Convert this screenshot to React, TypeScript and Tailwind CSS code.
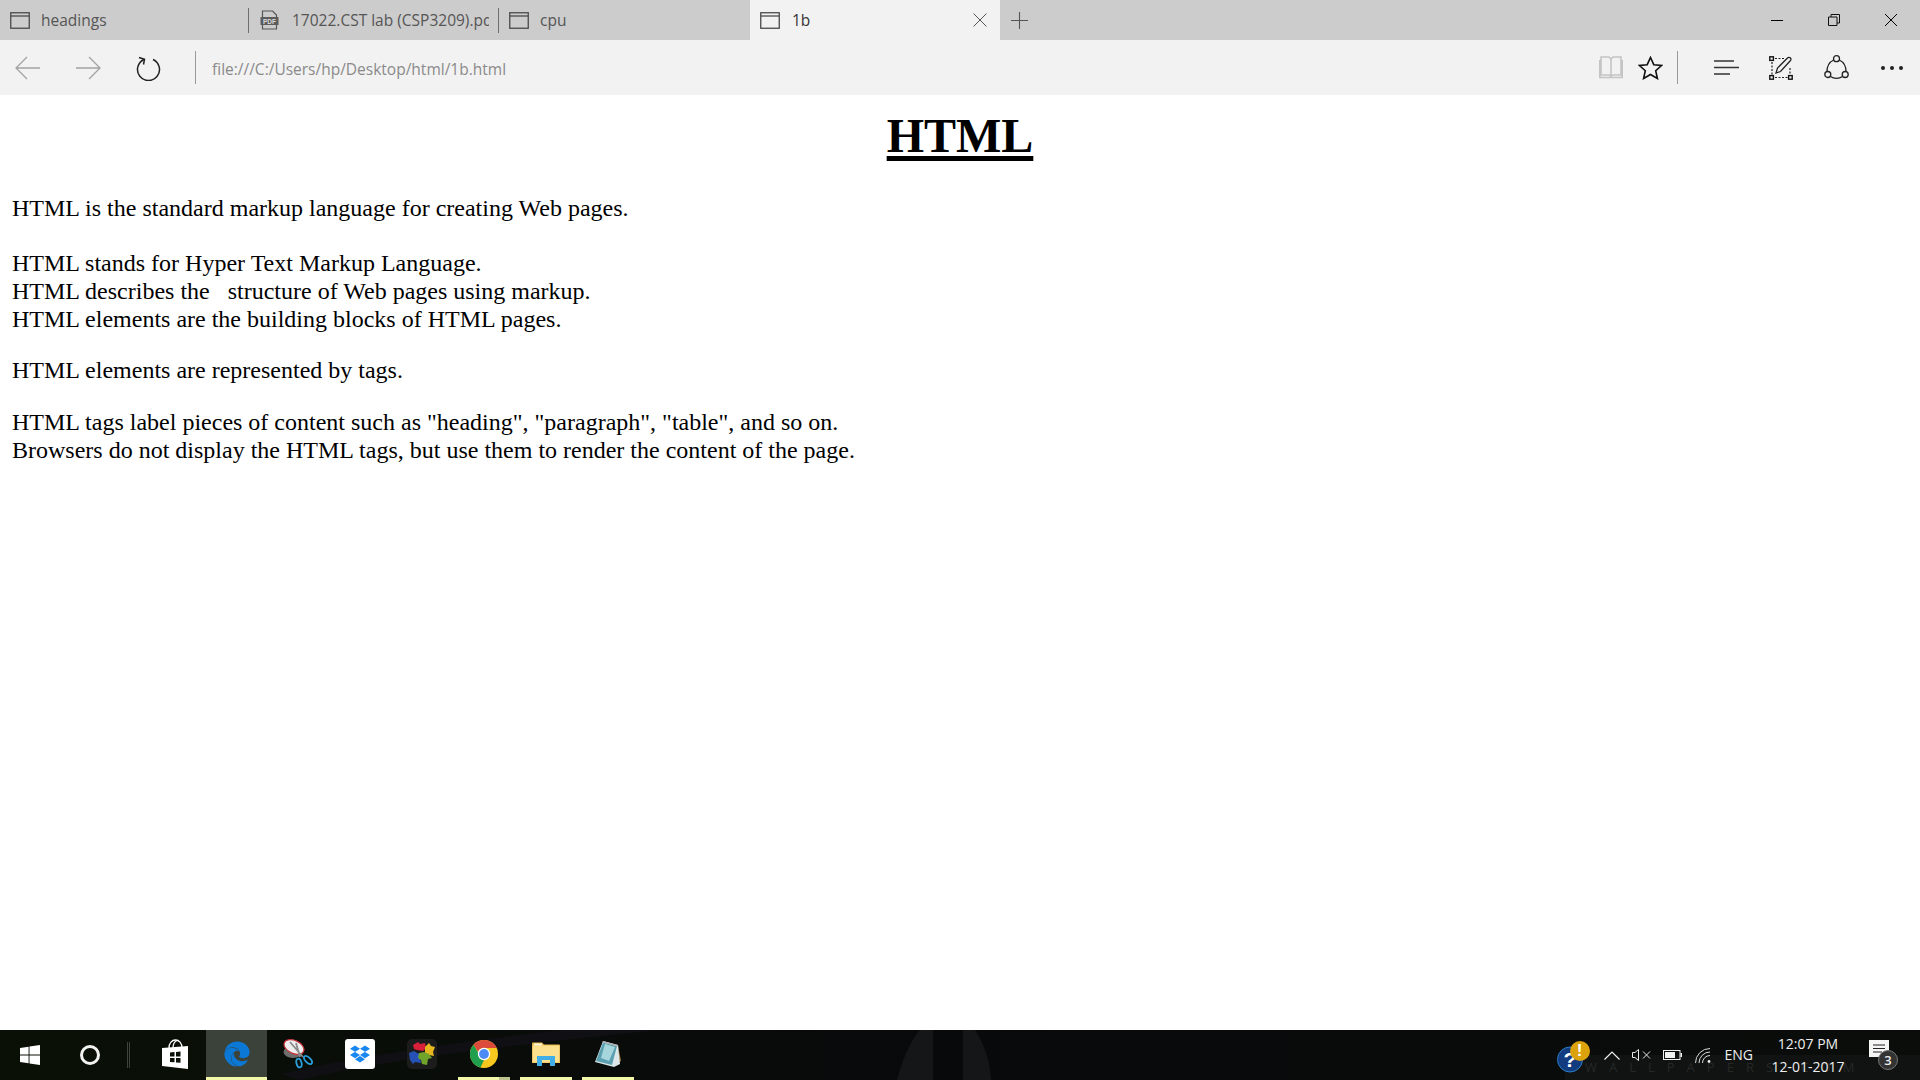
import type { ReactNode } from "react";
import { FaEdge, FaDropbox } from "react-icons/fa";

function TabIcon() {
  return (
    <svg width="20" height="17" viewBox="0 0 20 17" fill="none" className="shrink-0">
      <rect x="0.75" y="0.75" width="18.5" height="15.5" stroke="#4a4a4a" strokeWidth="1.3" />
      <line x1="1" y1="4" x2="19" y2="4" stroke="#4a4a4a" strokeWidth="1.3" />
    </svg>
  );
}

function PdfIcon() {
  return (
    <svg width="19" height="20" viewBox="0 0 19 20" fill="none" className="shrink-0">
      <path d="M2.5 7V1h10l4 4v2M2.5 15v4h14v-4" stroke="#555" strokeWidth="1.2" />
      <rect x="0.5" y="7" width="18" height="8" fill="#5c5c5c" />
      <text x="9.5" y="13.5" textAnchor="middle" fontSize="6.5" fontWeight="700" fill="#ddd" fontFamily="Liberation Sans, sans-serif">PDF</text>
    </svg>
  );
}

function Tab({ title, pdf, width }: { title: string; pdf?: boolean; width: string }) {
  return (
    <div className={`flex h-full items-center overflow-hidden ${width}`}>
      <div className={pdf ? "ml-[11px]" : "ml-[10px]"}>{pdf ? <PdfIcon /> : <TabIcon />}</div>
      <span className={`mt-[2px] whitespace-nowrap text-[15.5px] text-[#555] ${pdf ? "ml-[13px]" : "ml-[11px]"}`}>{title}</span>
    </div>
  );
}

function Sep() {
  return <div className="h-[25px] w-px shrink-0 bg-[#6e6e6e]" />;
}

function TabStrip() {
  return (
    <div className="flex h-10 items-center bg-[#cccccc]">
      <Tab title="headings" width="w-[248px]" />
      <Sep />
      <Tab title="17022.CST lab (CSP3209).pdf" pdf width="w-[240px]" />
      <div className="w-[9px]" />
      <Sep />
      <Tab title="cpu" width="w-[251px]" />
      <div className="flex h-full w-[250px] items-center bg-[#f2f2f2]">
        <div className="ml-[10px]"><TabIcon /></div>
        <span className="ml-3 mt-[2px] text-[15.5px] text-[#333]">1b</span>
        <svg width="14" height="14" viewBox="0 0 14 14" className="ml-auto mr-[13px]" stroke="#555" strokeWidth="1">
          <path d="M0.5 0.5l13 13M13.5 0.5l-13 13" />
        </svg>
      </div>
      <svg width="17" height="17" viewBox="0 0 17 17" className="ml-[11px]" stroke="#555" strokeWidth="1.1">
        <path d="M8.5 0v17M0 8.5h17" />
      </svg>
      <div className="ml-auto flex items-center pr-[23px]">
        <svg width="12" height="12" viewBox="0 0 12 12" stroke="#000" strokeWidth="1"><path d="M0 6.5h12" /></svg>
        <svg width="12" height="12" viewBox="0 0 12 12" fill="none" stroke="#111" strokeWidth="1" className="ml-[45px]">
          <path d="M0.5 3h8.5v8.5h-8.5zM3 3V0.5h8.5v8.5H9" />
        </svg>
        <svg width="12" height="12" viewBox="0 0 12 12" stroke="#000" strokeWidth="1" className="ml-[45px]">
          <path d="M0 0l12 12M12 0L0 12" />
        </svg>
      </div>
    </div>
  );
}

function Toolbar() {
  return (
    <div className="flex h-[55px] items-center bg-[#f2f2f2]">
      <svg width="25" height="24" viewBox="0 0 25 24" fill="none" stroke="#a3a3a3" strokeWidth="1.3" className="ml-[15px]">
        <path d="M25 12H1M12 1L1 12l11 11" />
      </svg>
      <svg width="25" height="24" viewBox="0 0 25 24" fill="none" stroke="#a3a3a3" strokeWidth="1.3" className="ml-[36px]">
        <path d="M0 12h24M13 1l11 11-11 11" />
      </svg>
      <svg width="25" height="26" viewBox="0 0 25 26" fill="none" stroke="#222" strokeWidth="1.5" className="ml-[35px]">
        <path d="M8 4.5a11 11 0 1 0 9 0" />
        <path d="M3 2.5l5.5 1.8L7.500 9.500" />
      </svg>
      <div className="ml-[34px] h-[33px] w-px bg-[#999]" />
      <span className="ml-4 mt-1 text-[15.5px] text-[#8a8a8a]">file:///C:/Users/hp/Desktop/html/1b.html</span>
      <div className="ml-auto flex items-center pr-[17px]">
        <svg width="24" height="23" viewBox="0 0 24 23" fill="none" stroke="#c4c4c4" strokeWidth="1.6">
          <path d="M2 1h8l2 2 2-2h8v18h-8l-2 1-2-1H2zM12 3v17M0.8 4v17.5h22.4V4" />
        </svg>
        <svg width="25" height="24" viewBox="0 0 25 24" fill="none" stroke="#111" strokeWidth="1.6" className="ml-[15px]">
          <path d="M12.5 1.5l3.3 7.2 7.7.8-5.8 5.2 1.7 7.8-6.9-4-6.9 4 1.7-7.8L1.5 9.5l7.7-.8z" />
        </svg>
        <div className="ml-[14px] h-[33px] w-px bg-[#999]" />
        <svg width="25" height="15" viewBox="0 0 25 15" stroke="#333" strokeWidth="1.5" className="ml-[36px]">
          <path d="M0 1h20M0 7.5h25M0 14h16" />
        </svg>
        <svg width="24" height="24" viewBox="0 0 24 24" fill="none" className="ml-[30px]">
          <path d="M3 6v13M21 12v7M6 21.5h13M6 2.500h10" stroke="#222" strokeWidth="1.2" strokeDasharray="2 1.5" />
          <rect x="0.8" y="0.8" width="3.6" height="3.6" stroke="#111" strokeWidth="1.4" />
          <rect x="0.8" y="19.6" width="3.6" height="3.6" stroke="#111" strokeWidth="1.4" />
          <rect x="19.6" y="19.6" width="3.6" height="3.6" stroke="#111" strokeWidth="1.4" />
          <path d="M7 17l1.500-5L18.500 2a1.800 1.800 0 0 1 3 2.500L11.500 15.500z" stroke="#222" strokeWidth="1.3" />
        </svg>
        <svg width="25" height="25" viewBox="0 0 25 25" fill="none" stroke="#222" strokeWidth="1.3" className="ml-[31px]">
          <circle cx="12.5" cy="3.7" r="3" />
          <circle cx="3.8" cy="19.5" r="3" />
          <circle cx="21.2" cy="19.5" r="3" />
          <path d="M9.700 5C5.500 7 3 11 3 16.500M15.300 5c4.200 2 6.700 6 6.700 11.500M6.500 21.500c3.500 2.500 8.500 2.500 12 0" />
        </svg>
        <div className="ml-[32px] flex w-[22px] justify-between">
          <span className="size-1 rounded-full bg-[#222]" />
          <span className="size-1 rounded-full bg-[#222]" />
          <span className="size-1 rounded-full bg-[#222]" />
        </div>
      </div>
    </div>
  );
}

function PageBody() {
  return (
    <main className="flex-1 bg-white px-3 font-['Liberation_Serif','Times_New_Roman',serif] text-[24px] leading-[27.6px] text-black">
      <h1 className="pt-[13px] text-center text-[48px] font-bold leading-[55px] underline decoration-[5px] underline-offset-[4px] [text-decoration-skip-ink:none]">
        HTML
      </h1>
      <p className="mt-[32px]">HTML is the standard markup language for creating Web pages.</p>
      <p className="mt-[27px]">
        HTML stands for Hyper Text Markup Language.
        <br />
        <span className="mt-[1px] inline-block">HTML describes the&nbsp;&nbsp; structure of Web pages using markup.</span>
        <br />
        HTML elements are the building blocks of HTML pages.
      </p>
      <p className="mt-[24px]">HTML elements are represented by tags.</p>
      <p className="mt-[24px]">
        HTML tags label pieces of content such as "heading", "paragraph", "table", and so on.
        <br />
        Browsers do not display the HTML tags, but use them to render the content of the page.
      </p>
    </main>
  );
}

function WinLogo() {
  return (
    <svg width="20" height="20" viewBox="0 0 20 20" fill="#fff">
      <path d="M0 3l8.600-1.200v7.700H0zM9.500 1.600L20 0v9.500H9.500zM0 10.500h8.600v7.700L0 17zM9.500 10.500H20V20L9.500 18.400z" />
    </svg>
  );
}

function StoreIcon() {
  return (
    <svg width="26" height="30" viewBox="0 0 26 30" fill="none">
      <path d="M7 9c0-5 3-8 6.500-8S20 4 20 9M11 9c0-4 1.500-6.500 4-7.500" stroke="#fff" strokeWidth="1.3" />
      <path d="M0 9l26-2v23L0 27z" fill="#fff" />
      <path d="M8 13.500l4.500-.4v4.400H8zM14 13l4.500-.4v4.900H14zM8 19h4.500v4.300L8 23zM14 19h4.500v4.800l-4.500-.4z" fill="#0a0f08" />
    </svg>
  );
}

function SnipIcon() {
  return (
    <svg width="30" height="30" viewBox="0 0 30 30" fill="none">
      <ellipse cx="10" cy="13" rx="9.500" ry="6" fill="#6e6e6e" />
      <ellipse cx="11" cy="8" rx="10.500" ry="6.500" transform="rotate(25 11 8)" fill="#eeeeee" stroke="#c8333a" strokeWidth="1.200" />
      <path d="M7 3l13 15M13 4l4 14" stroke="#8a8a8a" strokeWidth="1.800" />
      <ellipse cx="16" cy="24" rx="2.500" ry="4.500" transform="rotate(-15 16 24)" stroke="#2a9fdc" strokeWidth="1.800" />
      <ellipse cx="25" cy="21" rx="2.500" ry="5" transform="rotate(-45 25 21)" stroke="#2a9fdc" strokeWidth="1.800" />
    </svg>
  );
}

function PuzzleIcon() {
  return (
    <svg width="30" height="30" viewBox="0 0 30 30">
      <rect width="30" height="30" rx="5" fill="#1c1c1c" />
      <path d="M6 6l5-3 2 2 5-1 1 5-3 3-6-1-3-1z" fill="#d8203a" />
      <path d="M18 8l4-4 2 3 4 1-2 5 1 4-5-1-4-2z" fill="#e6b71e" />
      <path d="M2 14l5-2 3 2 4 1-1 5 1 4-6-1-2 2-3-4z" fill="#2652b8" />
      <path d="M12 14l5-1 5 2 3 4-4 1-1 6-5-1-1-4-3-2z" fill="#6fa32a" />
    </svg>
  );
}

function ChromeIcon() {
  return (
    <svg width="28" height="28" viewBox="0 0 28 28">
      <circle cx="14" cy="14" r="14" fill="#f9c81e" />
      <path d="M14 0a14 14 0 0 1 12.600 8H14a6 6 0 0 0-5.700 4L3.500 4.700A14 14 0 0 1 14 0z" fill="#dc4a3c" />
      <path d="M3.500 4.700l5 8.300a6 6 0 0 0 5.500 7l-3.500 7.600A14 14 0 0 1 3.500 4.700z" fill="#1f9e4d" />
      <circle cx="14" cy="14" r="6.200" fill="#fff" />
      <circle cx="14" cy="14" r="4.900" fill="#4c8bf5" />
    </svg>
  );
}

function FolderIcon() {
  return (
    <svg width="28" height="24" viewBox="0 0 28 24">
      <path d="M0 1.500A1 1 0 0 1 1 .5h9l2 2h15a1 1 0 0 1 1 1V21H0z" fill="#e8b94c" />
      <rect x="0.700" y="3.500" width="26.600" height="17" fill="#fce08e" />
      <rect x="2" y="1.500" width="8" height="2" fill="#fff7d6" />
      <path d="M5 24V14h18v10h-5v-6h-8v6z" fill="#42aee8" />
    </svg>
  );
}

function NotepadIcon() {
  return (
    <svg width="28" height="28" viewBox="0 0 28 28">
      <path d="M24 5l3 16-2 1z" fill="#a07a3c" />
      <path d="M9 1l15 4 2 19-6 3L1 22z" fill="#dbe7ea" />
      <path d="M9 2.500l14 3.500-5 19L2 21z" fill="#5aa0b0" />
      <path d="M11 4l10 3-6 14-8-3z" fill="#a6d5dc" />
      <path d="M9 1l15 4-.5 1.500L8.500 2.500z" fill="#b0b0b0" />
    </svg>
  );
}

function AppSlot({ children, width, active, running, stacked }: { children: ReactNode; width: string; active?: boolean; running?: boolean; stacked?: boolean }) {
  return (
    <div className={`relative flex h-full shrink-0 items-center justify-center ${width} ${active ? "bg-[#3b4239]" : ""}`}>
      <div className="-mt-[2px] flex">{children}</div>
      {active && <div className="absolute inset-x-0 bottom-0 h-[3px] bg-[#f3f7a8]" />}
      {running && (
        <div className="absolute inset-x-[5px] bottom-0 flex h-[3px] justify-end bg-[#f3f7a8]">
          {stacked && <div className="w-[11px] bg-[#bfc48f]" />}
        </div>
      )}
    </div>
  );
}

function Tray() {
  return (
    <div className="relative ml-auto flex h-full items-center">
      <div className="relative -mt-[1px] h-[36px] w-[34px]">
        <svg width="26" height="28" viewBox="0 0 26 28" className="absolute bottom-0 left-0">
          <circle cx="13" cy="14.500" r="12.500" fill="#123b80" stroke="#2a7fc8" strokeWidth="1" />
          <text x="13" y="22" textAnchor="middle" fontSize="21" fontWeight="700" fill="#fff" fontFamily="Liberation Sans, sans-serif">?</text>
        </svg>
        <div className="absolute left-[13px] top-[4px] flex size-[20px] items-center justify-center rounded-full bg-[#dca20c] font-['Liberation_Sans',sans-serif] text-[17px] font-bold leading-none text-white">!</div>
      </div>
      <svg width="16" height="9" viewBox="0 0 16 9" fill="none" stroke="#f0f0f0" strokeWidth="1.200" className="ml-[13px]">
        <path d="M0.500 8.500L8 1l7.500 7.500" />
      </svg>
      <svg width="19" height="12" viewBox="0 0 19 12" fill="none" stroke="#e8e8e8" strokeWidth="1" className="ml-3">
        <path d="M0.500 3.500h2.500L6.500 0.500v11L3 8.500H0.500zM11 2.500l7 7M18 2.500l-7 7" />
      </svg>
      <svg width="19" height="10" viewBox="0 0 19 10" className="ml-3">
        <rect x="0.500" y="0.500" width="16.500" height="9" fill="none" stroke="#f0f0f0" />
        <rect x="2" y="2" width="10" height="6" fill="#f0f0f0" />
        <rect x="17.500" y="3" width="1.500" height="4" fill="#f0f0f0" />
      </svg>
      <svg width="16" height="15" viewBox="0 0 16 15" fill="none" stroke="#d8d8d8" strokeWidth="1" className="ml-[13px]">
        <path d="M0.500 15A14.500 14.500 0 0 1 15 0.500M4 15A11 11 0 0 1 15 4M7.500 15A7.500 7.500 0 0 1 15 7.500" />
        <circle cx="14" cy="13.500" r="1.400" fill="#f0f0f0" stroke="none" />
      </svg>
      <span className="ml-[14px] text-[14px] leading-none text-[#eeeeee]">ENG</span>
      <div className="ml-[17px] flex w-[76px] flex-col items-center text-[14px] leading-[23px] text-[#eeeeee]">
        <span>12:07 PM</span>
        <span>12-01-2017</span>
      </div>
      <div className="relative ml-[23px] mr-[31px] -mt-[2px] h-[28px] w-5">
        <svg width="20" height="18" viewBox="0 0 20 18" className="absolute left-0 top-0">
          <path d="M0 0h20v17H0z" fill="#f5f5f5" />
          <path d="M4 5h12M4 8.500h12M4 12h9" stroke="#222" strokeWidth="1" />
        </svg>
        <div className="absolute left-[9px] top-[10px] flex size-[20px] items-center justify-center rounded-full border border-[#777] bg-[#333] text-[13px] font-semibold leading-none text-[#eeeeee]">3</div>
      </div>
    </div>
  );
}

function Taskbar() {
  return (
    <div className="relative flex h-[50px] items-center overflow-hidden bg-gradient-to-r from-[#0a1006] via-[#08090b] to-[#0a0d0a] font-['Open_Sans',sans-serif]">
      {/* wallpaper showing through the bar */}
      <svg width="1920" height="50" viewBox="0 0 1920 50" className="absolute left-0 top-0">
        <path d="M897 50C902 30 910 12 920 0H933V50z" fill="#151617" />
        <path d="M963 0H975C985 15 990 32 991 50H963z" fill="#151617" />
        <path d="M280 44C360 26 460 12 560 0H660C520 14 380 30 300 50z" fill="#101014" />
      </svg>
      <div className="absolute bottom-0 right-0 flex h-[25px] w-[355px] items-center overflow-hidden whitespace-nowrap bg-[#111312] pl-5 text-[13px] tracking-[12px] text-[#262827]">
        WALLPAPERS.COM
      </div>

      <div className="relative flex h-full w-full items-center">
        <div className="ml-5"><WinLogo /></div>
        <div className="ml-[40px] size-[20px] rounded-full border-[3px] border-[#f2f2f2]" />
        <div className="ml-[27px] flex h-[26px] w-[3px] justify-between">
          <span className="w-px bg-[#3d423d]" />
          <span className="w-px bg-[#3d423d]" />
        </div>
        <AppSlot width="w-[63px] ml-[13px]"><StoreIcon /></AppSlot>
        <AppSlot width="w-[61px]" active><FaEdge className="size-[26px] text-[#0b78d6]" /></AppSlot>
        <AppSlot width="w-[62px]"><SnipIcon /></AppSlot>
        <AppSlot width="w-[62px]">
          <div className="flex size-[30px] items-center justify-center rounded-[3px] bg-white"><FaDropbox className="size-[20px] text-[#1a86f0]" /></div>
        </AppSlot>
        <AppSlot width="w-[62px]"><PuzzleIcon /></AppSlot>
        <AppSlot width="w-[62px]" running stacked><ChromeIcon /></AppSlot>
        <AppSlot width="w-[62px]" running><FolderIcon /></AppSlot>
        <AppSlot width="w-[62px]" running><NotepadIcon /></AppSlot>
        <Tray />
      </div>
    </div>
  );
}

export default function App() {
  return (
    <div className="flex h-[1080px] w-[1920px] flex-col overflow-hidden font-['Open_Sans',sans-serif]">
      <TabStrip />
      <Toolbar />
      <PageBody />
      <Taskbar />
    </div>
  );
}
